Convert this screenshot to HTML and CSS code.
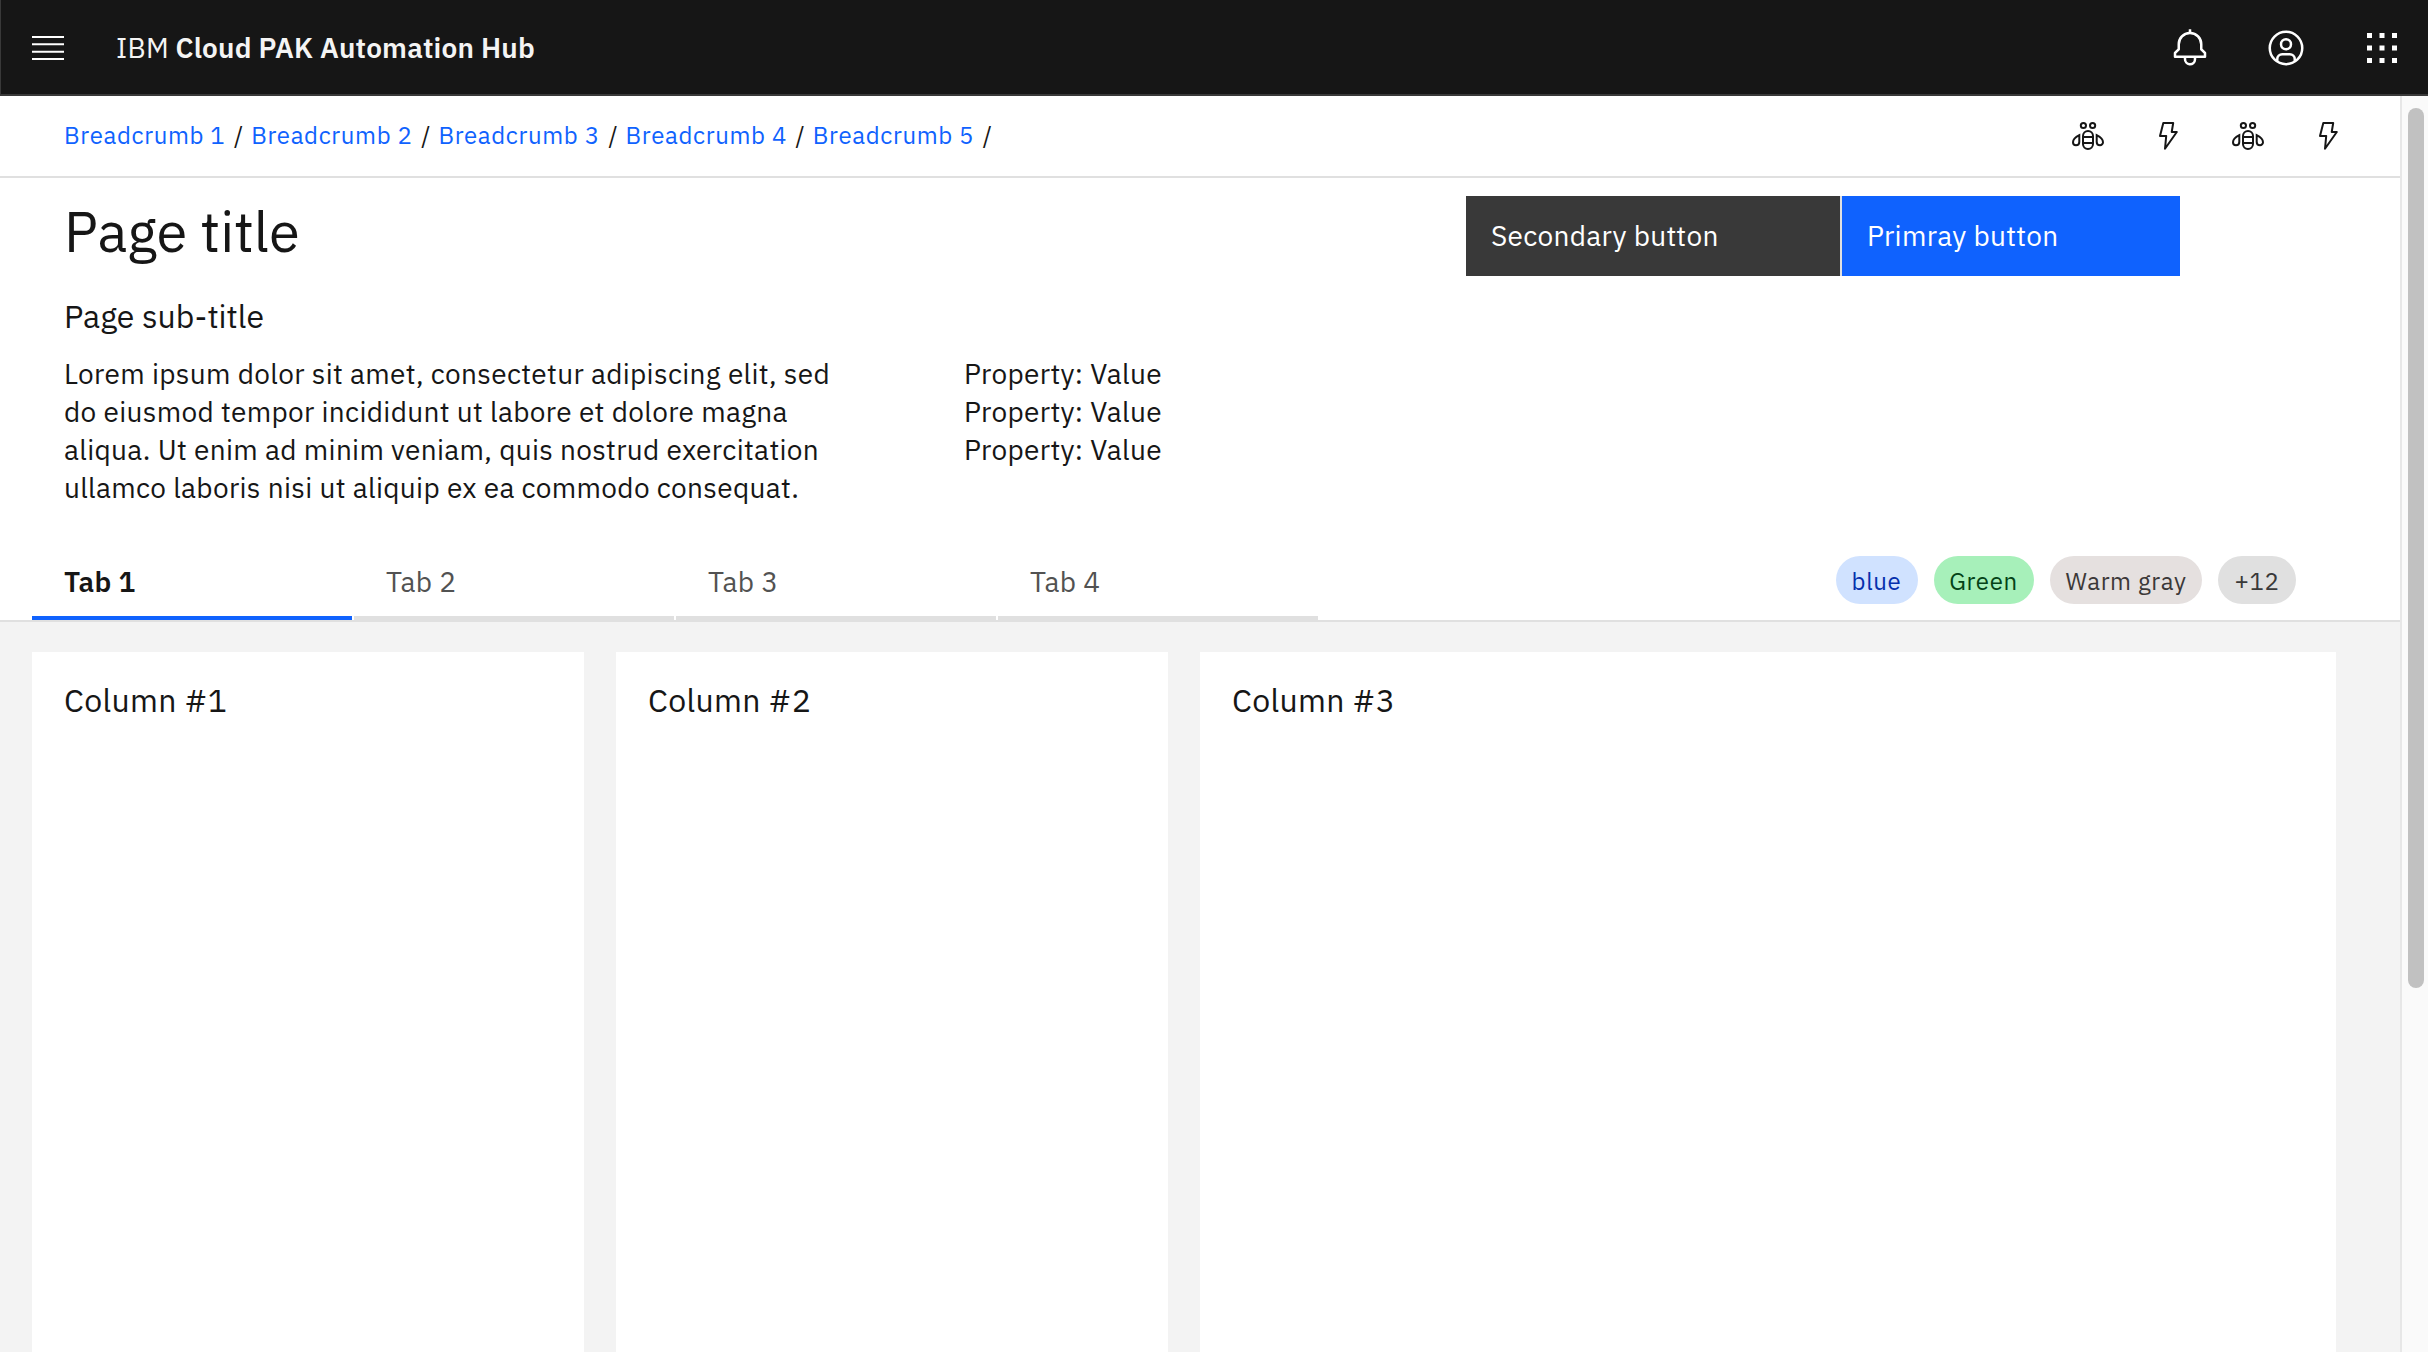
FILE: index.html
```html
<!DOCTYPE html>
<html lang="en">
<head>
<meta charset="utf-8">
<title>Automation Hub</title>
<link rel="stylesheet" href="styles.css">
</head>
<body>
<svg class="sprite" aria-hidden="true">
  <symbol id="bee" viewBox="0 0 32 32"><g fill="none" stroke="currentColor" stroke-width="2"><circle cx="11.400" cy="5.500" r="2.600"/><circle cx="20.600" cy="5.500" r="2.600"/><rect x="11" y="11" width="10" height="18" rx="5"/><path d="M11 17h10M11 23h10M7.300 15.200C3.500 17.200 1 19.800 1 22.200a3 3 0 0 0 3 3c2 0 3.300-1.200 3.300-3.200zM24.700 15.200c3.800 2 6.300 4.600 6.300 7a3 3 0 0 1-3 3c-2 0-3.300-1.200-3.300-3.200z"/></g></symbol>
  <symbol id="bolt" viewBox="0 0 32 32"><path d="M11.300 3H21.200L19.700 12H24.800L13 28.800 14.200 16H8z" fill="none" stroke="currentColor" stroke-width="2" stroke-linejoin="round"/></symbol>
</svg>
<header class="topbar">
  <svg class="menu" viewBox="0 0 32 24" fill="currentColor"><path d="M0 0h32v2H0zM0 7.300h32v2H0zM0 14.700h32v2H0zM0 22h32v2H0z"/></svg>
  <div class="brand"><span class="brand-prefix">IBM</span><span class="brand-name">Cloud PAK Automation Hub</span></div>
  <nav class="top-actions">
    <svg viewBox="0 0 32 32" fill="currentColor"><path d="M28.707 19.293 26 16.586V13a10.014 10.014 0 0 0-9-9.950V1h-2v2.050A10.014 10.014 0 0 0 6 13v3.586l-2.707 2.707A1 1 0 0 0 3 20v3a1 1 0 0 0 1 1h7v.777a5.152 5.152 0 0 0 4.500 5.199A5.006 5.006 0 0 0 21 25v-1h7a1 1 0 0 0 1-1v-3a1 1 0 0 0-.293-.707ZM19 25a3 3 0 0 1-6 0v-1h6Zm8-3H5v-1.586l2.707-2.707A1 1 0 0 0 8 17v-4a8 8 0 0 1 16 0v4a1 1 0 0 0 .293.707L27 20.414Z"/></svg>
    <svg viewBox="0 0 32 32" fill="none" stroke="currentColor" stroke-width="2"><circle cx="16" cy="16" r="13"/><circle cx="16" cy="13" r="4"/><path d="M9 26.500V25a4 4 0 0 1 4-4h6a4 4 0 0 1 4 4v1.500"/></svg>
    <svg viewBox="0 0 32 32" fill="currentColor"><path d="M4 4h4v4H4zM14 4h4v4h-4zM24 4h4v4h-4zM4 14h4v4H4zM14 14h4v4h-4zM24 14h4v4h-4zM4 24h4v4H4zM14 24h4v4h-4zM24 24h4v4h-4z"/></svg>
  </nav>
</header>
<div class="viewport">
  <main class="page">
    <div class="crumbbar">
      <ol class="crumbs">
        <li><a>Breadcrumb 1</a><span>/</span></li>
        <li><a>Breadcrumb 2</a><span>/</span></li>
        <li><a>Breadcrumb 3</a><span>/</span></li>
        <li><a>Breadcrumb 4</a><span>/</span></li>
        <li><a>Breadcrumb 5</a><span>/</span></li>
      </ol>
      <div class="page-icons">
        <svg><use href="#bee"/></svg>
        <svg><use href="#bolt"/></svg>
        <svg><use href="#bee"/></svg>
        <svg><use href="#bolt"/></svg>
      </div>
    </div>
    <section class="intro">
      <div class="intro-top">
        <h1>Page title</h1>
        <div class="buttons">
          <button class="secondary">Secondary button</button>
          <button class="primary">Primray button</button>
        </div>
      </div>
      <h2>Page sub-title</h2>
      <div class="details">
        <p class="description">Lorem ipsum dolor sit amet, consectetur adipiscing elit, sed<br>do eiusmod tempor incididunt ut labore et dolore magna<br>aliqua. Ut enim ad minim veniam, quis nostrud exercitation<br>ullamco laboris nisi ut aliquip ex ea commodo consequat.</p>
        <ul class="properties"><li>Property: Value</li><li>Property: Value</li><li>Property: Value</li></ul>
      </div>
    </section>
    <div class="tabrow">
      <nav class="tabs">
        <a class="tab active">Tab 1</a>
        <a class="tab">Tab 2</a>
        <a class="tab">Tab 3</a>
        <a class="tab">Tab 4</a>
      </nav>
      <div class="tags">
        <span class="tag blue">blue</span>
        <span class="tag green">Green</span>
        <span class="tag warm">Warm gray</span>
        <span class="tag more">+12</span>
      </div>
    </div>
    <section class="columns">
      <article>Column #1</article>
      <article>Column #2</article>
      <article>Column #3</article>
    </section>
  </main>
  <aside class="scrollbar"><div class="thumb"></div></aside>
</div>
</body>
</html>
```

FILE: styles.css
```css
* { box-sizing: border-box; }
body {
  margin: 0;
  height: 1352px;
  overflow: hidden;
  display: flex;
  flex-direction: column;
  font-family: "IBM Plex Sans", Roboto, sans-serif;
  font-size: 28px;
  color: #161616;
  background: #fff;
}
h1, h2, p, ul, ol { margin: 0; padding: 0; font-weight: 400; list-style: none; }
svg { display: block; }
.sprite { display: none; }

/* Top bar */
.topbar {
  flex: none;
  height: 96px;
  display: flex;
  align-items: center;
  padding: 0 26px 0 31px;
  background: #161616;
  border-bottom: 2px solid #393939;
  border-left: 1px solid #393939;
  color: #f4f4f4;
}
.menu { width: 32px; height: 24px; margin-top: 2px; color: #fff; }
.brand { display: flex; margin-left: 52px; line-height: 40px; margin-top: 2px; white-space: nowrap; letter-spacing: 0.200px; }
.brand-prefix { width: 59.500px; font-weight: 400; }
.brand-name { font-weight: 600; }
.top-actions { display: flex; gap: 56px; margin-left: auto; margin-top: 2px; color: #fff; }
.top-actions svg { width: 40px; height: 40px; }

.viewport { flex: 1; min-height: 0; display: flex; }
.page { flex: 1; min-width: 0; display: flex; flex-direction: column; }

/* Breadcrumbs */
.crumbbar {
  height: 82px;
  flex: none;
  display: flex;
  align-items: center;
  justify-content: space-between;
  padding: 0 56px 0 64px;
  border-bottom: 2px solid #e0e0e0;
}
.crumbs { display: flex; font-size: 24px; line-height: 32px; padding-bottom: 2px; white-space: nowrap; }
.crumbs li { width: 187.200px; display: flex; }
.crumbs a { width: 170px; color: #0f62fe; letter-spacing: 0.640px; }
.page-icons { display: flex; gap: 48px; }
.page-icons svg { width: 32px; height: 32px; }

/* Title area */
.intro { flex: none; height: 372px; }
.intro-top { height: 98px; padding: 18px 220px 0 64px; display: flex; justify-content: space-between; }
h1 { font-size: 56px; line-height: 70px; }
.buttons { display: flex; height: 80px; gap: 2px; background: linear-gradient(#e0e0e0, #e0e0e0) 374px 0 / 2px 100% no-repeat; }
button { border: 0; padding: 0 25px 1px; font: inherit; letter-spacing: 0.320px; color: #fff; text-align: left; height: 80px; }
.secondary { width: 374px; background: #393939; }
.primary { width: 338px; background: #0f62fe; }
h2 { font-size: 32px; line-height: 40px; margin: 20px 0 0 64px; }
.details { display: flex; margin: 19px 0 0 64px; line-height: 38px; letter-spacing: 0.320px; white-space: nowrap; }
.description { width: 900px; }

/* Tabs and tags */
.tabrow { flex: none; height: 72px; display: flex; justify-content: space-between; padding: 0 104px 0 32px; border-bottom: 2px solid #e0e0e0; }
.tabs { display: flex; gap: 2px; }
.tab { width: 320px; height: 70px; padding: 12px 32px 0; line-height: 40px; letter-spacing: 0.320px; color: #525252; border-bottom: 4px solid #e0e0e0; }
.tab.active { color: #161616; font-weight: 600; border-color: #0f62fe; }
.tags { display: flex; gap: 16px; margin-top: 6px; }
.tag { height: 48px; border-radius: 24px; text-align: center; font-size: 24px; line-height: 50px; letter-spacing: 0.640px; }
.blue { width: 82px; background: #d0e2ff; color: #0530ad; text-indent: -1px; }
.green { width: 100px; background: #a7f0ba; color: #044317; text-indent: -1px; }
.warm { width: 152px; background: #e5e0df; color: #3c3838; }
.more { width: 78px; background: #e0e0e0; color: #393939; }

/* Columns */
.columns { flex: 1; min-height: 0; display: grid; grid-template-columns: 552px 552px 1136px; gap: 32px; padding: 30px 64px 0 32px; background: #f3f3f3; }
article { background: #fff; padding: 28px 32px; font-size: 32px; line-height: 40px; letter-spacing: 0.320px; }

/* Scrollbar */
.scrollbar { flex: none; width: 28px; background: #fafafa; border-left: 2px solid #e7e7e7; padding: 12px 0 0 6px; }
.thumb { width: 16px; height: 880px; border-radius: 8px; background: #c1c1c1; }
```
